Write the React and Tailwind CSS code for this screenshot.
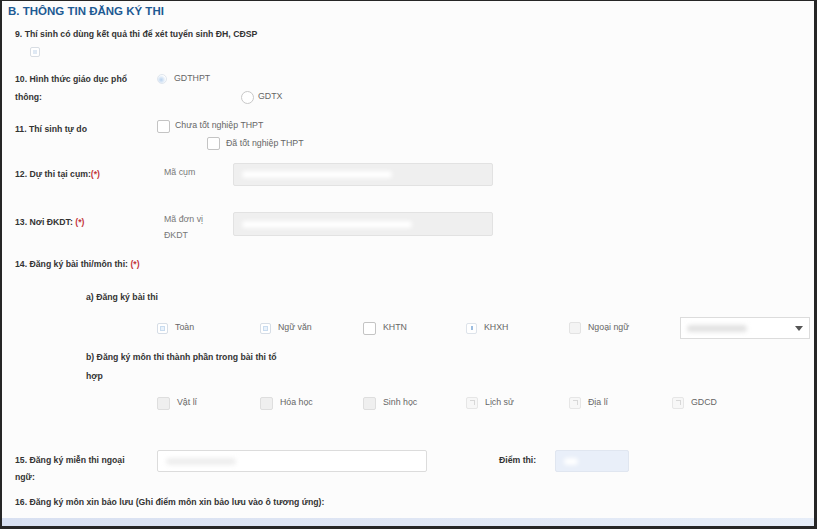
const font = { fontFamily: '"Liberation Sans", Arial, sans-serif' };

function Req() {
  return <span className="text-[#c4343b]">(*)</span>;
}

function Box({ kind = "plain" }) {
  // a few visual states seen on the form
  if (kind === "tinted") {
    return (
      <span className="flex h-[11px] w-[11px] shrink-0 items-center justify-center rounded-[2px] border border-[#d6dde6] bg-white">
        <span className="h-[5px] w-[5px] border border-[#c9dcef] bg-[#eaf2fb]" />
      </span>
    );
  }
  if (kind === "mark") {
    return (
      <span className="flex h-[11px] w-[11px] shrink-0 items-center justify-center rounded-[2px] border border-[#dde3ea] bg-white">
        <span className="h-[4px] w-[2px] bg-[#9cbde0]" />
      </span>
    );
  }
  if (kind === "white") {
    return <span className="h-[13px] w-[13px] shrink-0 rounded-[2px] border border-[#c4c4c4] bg-white" />;
  }
  if (kind === "gray") {
    return <span className="h-[13px] w-[13px] shrink-0 rounded-[2px] border border-[#dedede] bg-[#efefef]" />;
  }
  if (kind === "faint") {
    return (
      <span className="relative h-[12px] w-[12px] shrink-0 rounded-[2px] border border-[#e6e6e6] bg-[#f7f7f7]">
        <span className="absolute right-[2px] top-[2px] h-[5px] w-[5px] border-r border-t border-[#d8d8d8]" />
      </span>
    );
  }
  return <span className="h-[12px] w-[12px] shrink-0 rounded-[2px] border border-[#e3e3e3] bg-[#f4f4f4]" />;
}

function Opt({ kind, children }) {
  return (
    <div className="flex w-[103px] items-center gap-[7px]">
      <Box kind={kind} />
      <span className="text-[8.8px] text-[#666]">{children}</span>
    </div>
  );
}

function Blur({ w, color = "bg-white" }) {
  return <span className={`block h-[7px] rounded-full blur-[2px] ${color}`} style={{ width: w }} />;
}

export default function App() {
  return (
    <div
      style={font}
      className="flex h-[529px] w-[817px] flex-col overflow-hidden border-b-[3px] border-l-2 border-r-[3px] border-t border-[#262626] bg-[#fcfcfc]"
    >
      <div className="h-[20px] pl-[6px] text-[11.5px] font-bold leading-[20px] text-[#1d5a93]">
        B. THÔNG TIN ĐĂNG KÝ THI
      </div>

      <div className="pl-[13px] text-[8.7px] text-[#333]">
        <div className="mt-[4px] h-[18px] font-bold leading-[18px]">
          9. Thí sinh có dùng kết quả thi để xét tuyển sinh ĐH, CĐSP
        </div>
        <div className="ml-[15px] mt-[4px] flex h-[10px] w-[10px] items-center justify-center rounded-[2px] border border-[#d8dde3] bg-white">
          <span className="h-[4px] w-[4px] bg-[#dfe9f4]" />
        </div>

        {/* 10 */}
        <div className="mt-[13px] flex">
          <div className="w-[142px] font-bold leading-[18px]">
            10. Hình thức giáo dục phổ
            <br />
            thông:
          </div>
          <div className="flex flex-col text-[8.8px] text-[#666]">
            <div className="flex h-[18px] items-center gap-[7px]">
              <span className="h-[10px] w-[10px] rounded-full border border-[#e0e6ee] bg-[radial-gradient(circle_at_40%_60%,#b9d2ee,#ffffff_70%)]" />
              <span>GDTHPT</span>
            </div>
            <div className="ml-[84px] flex h-[18px] items-center gap-[4px]">
              <span className="h-[13px] w-[13px] rounded-full border border-[#c8c8c8] bg-white" />
              <span>GDTX</span>
            </div>
          </div>
        </div>

        {/* 11 */}
        <div className="mt-[11px] flex">
          <div className="w-[142px] pt-[3px] font-bold leading-[18px]">11. Thí sinh tự do</div>
          <div className="flex flex-col text-[8.8px] text-[#666]">
            <div className="flex h-[18px] items-center gap-[5px]">
              <Box kind="white" />
              <span>Chưa tốt nghiệp THPT</span>
            </div>
            <div className="ml-[50px] flex h-[17px] items-center gap-[6px]">
              <Box kind="white" />
              <span>Đã tốt nghiệp THPT</span>
            </div>
          </div>
        </div>

        {/* 12 */}
        <div className="mt-[11px] flex h-[23px] items-center">
          <div className="w-[142px] font-bold">
            12. Dự thi tại cụm:<Req />
          </div>
          <div className="ml-[7px] w-[69px] self-start pt-[1px] text-[8.8px] leading-[16px] text-[#777]">Mã cụm</div>
          <div className="flex h-[23px] w-[260px] items-center rounded-[2px] border border-[#e2e2e2] bg-[#efefef] pl-[8px]">
            <Blur w={150} />
          </div>
        </div>

        {/* 13 */}
        <div className="mt-[26px] flex h-[24px]">
          <div className="w-[142px] font-bold leading-[20px]">
            13. Nơi ĐKDT: <Req />
          </div>
          <div className="-mt-px ml-[7px] w-[69px] text-[8.8px] leading-[16px] text-[#777]">
            Mã đơn vị
            <br />
            ĐKDT
          </div>
          <div className="flex h-[24px] w-[260px] items-center rounded-[2px] border border-[#e2e2e2] bg-[#efefef] pl-[8px]">
            <Blur w={170} />
          </div>
        </div>

        {/* 14 */}
        <div className="mt-[19px] h-[18px] font-bold leading-[18px]">
          14. Đăng ký bài thi/môn thi: <Req />
        </div>
        <div className="ml-[71px] mt-[15px] h-[18px] font-bold leading-[18px]">a) Đăng ký bài thi</div>

        <div className="ml-[142px] mt-[11px] flex h-[22px] items-center">
          <Opt kind="tinted">Toàn</Opt>
          <Opt kind="tinted">Ngữ văn</Opt>
          <Opt kind="white">KHTN</Opt>
          <Opt kind="mark">KHXH</Opt>
          <Opt kind="plain">Ngoại ngữ</Opt>
          <div className="ml-[8px] flex h-[22px] w-[130px] items-center justify-between border border-[#dcdcdc] bg-white pl-[6px] pr-[6px]">
            <Blur w={60} color="bg-[#e2e2e2]" />
            <svg width="8" height="5" viewBox="0 0 8 5">
              <path d="M0 0h8L4 5z" fill="#555" />
            </svg>
          </div>
        </div>

        <div className="ml-[71px] mt-[9px] font-bold leading-[19px]">
          b) Đăng ký môn thi thành phần trong bài thi tổ
          <br />
          hợp
        </div>

        <div className="ml-[142px] mt-[8px] flex h-[18px] items-center">
          <Opt kind="gray">Vật lí</Opt>
          <Opt kind="gray">Hóa học</Opt>
          <Opt kind="gray">Sinh học</Opt>
          <Opt kind="faint">Lịch sử</Opt>
          <Opt kind="faint">Địa lí</Opt>
          <Opt kind="faint">GDCD</Opt>
        </div>

        {/* 15 */}
        <div className="mt-[38px] flex">
          <div className="w-[142px] pt-[2px] font-bold leading-[17px]">
            15. Đăng ký miễn thi ngoại
            <br />
            ngữ:
          </div>
          <div className="flex h-[22px] w-[270px] items-center rounded-[2px] border border-[#dcdcdc] bg-white pl-[8px]">
            <Blur w={70} color="bg-[#eeeeee]" />
          </div>
          <div className="ml-[72px] flex h-[22px] w-[56px] items-center font-bold">Điểm thi:</div>
          <div className="flex h-[22px] w-[74px] items-center rounded-[2px] border border-[#e0e6f0] bg-[#e9eff9] pl-[8px]">
            <Blur w={14} />
          </div>
        </div>

        {/* 16 */}
        <div className="mt-[7px] h-[18px] font-bold leading-[18px]">
          16. Đăng ký môn xin bảo lưu (Ghi điểm môn xin bảo lưu vào ô tương ứng):
        </div>
      </div>

      <div className="mt-auto h-[8px] bg-gradient-to-r from-[#d8e0f1] via-[#dfe6f4] to-[#e6edf8]" />
    </div>
  );
}
